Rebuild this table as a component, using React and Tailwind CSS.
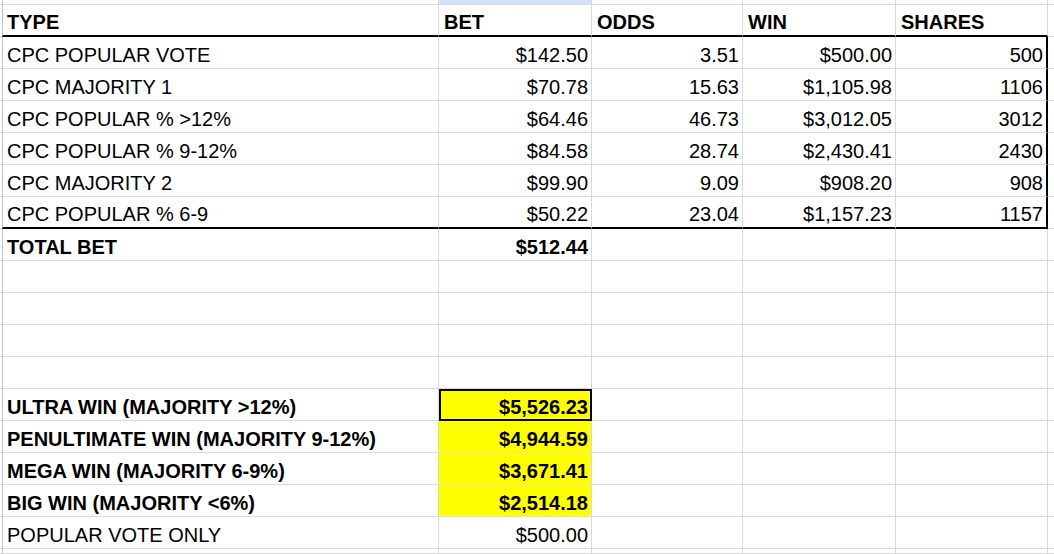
import React from "react";

const GRID = "border-b border-b-[#dadada]";
const GRID_R = "border-r border-r-[#dadada]";
const THICK_B = "border-b-2 border-b-black";

const data = [
  ["CPC POPULAR VOTE", "$142.50", "3.51", "$500.00", "500"],
  ["CPC MAJORITY 1", "$70.78", "15.63", "$1,105.98", "1106"],
  ["CPC POPULAR % >12%", "$64.46", "46.73", "$3,012.05", "3012"],
  ["CPC POPULAR % 9-12%", "$84.58", "28.74", "$2,430.41", "2430"],
  ["CPC MAJORITY 2", "$99.90", "9.09", "$908.20", "908"],
  ["CPC POPULAR % 6-9", "$50.22", "23.04", "$1,157.23", "1157"],
];

const wins = [
  ["ULTRA WIN (MAJORITY >12%)", "$5,526.23"],
  ["PENULTIMATE WIN (MAJORITY 9-12%)", "$4,944.59"],
  ["MEGA WIN (MAJORITY 6-9%)", "$3,671.41"],
  ["BIG WIN (MAJORITY <6%)", "$2,514.18"],
];

function Cell({ w, b = GRID, r = GRID_R, right, bold, extra = "", children }) {
  return (
    <div
      className={`${w} ${b} ${r} ${extra} h-full shrink-0 flex items-end pb-[3px] overflow-hidden whitespace-nowrap ${
        right ? "justify-end pr-[3px]" : "pl-[5px]"
      } ${bold ? "font-bold" : ""}`}
    >
      {children}
    </div>
  );
}

// one sheet row: gutter + A..E + the cut-off column F
function Row({ h = "h-[32px]", cells, fb = GRID }) {
  return (
    <div className={`flex ${h}`}>
      <div className={`w-[2px] shrink-0 ${GRID}`}></div>
      {cells}
      <div className={`flex-1 ${fb}`}></div>
    </div>
  );
}

function blankCells() {
  return (
    <>
      <Cell w="w-[151px]" />
      <Cell w="w-[153px]" />
      <Cell w="w-[152px]" />
    </>
  );
}

export default function App() {
  return (
    <div
      className="w-[1054px] h-[554px] overflow-hidden bg-white text-black text-[20px] leading-[20px]"
      style={{ fontFamily: '"Liberation Sans", Arial, sans-serif' }}
    >
      {/* sliver of the row above */}
      <Row
        h="h-[5px]"
        cells={
          <>
            <Cell w="w-[437px]" extra="border-l border-l-[#c4c4c4]" />
            <Cell w="w-[153px]" extra="bg-[#d3e3fd]" />
            <Cell w="w-[151px]" />
            <Cell w="w-[153px]" />
            <Cell w="w-[152px]" />
          </>
        }
      />

      {/* header */}
      <Row
        cells={
          <>
            <Cell w="w-[437px]" b={THICK_B} bold extra="border-l border-l-[#c4c4c4] !pl-[4px]">TYPE</Cell>
            <Cell w="w-[153px]" b={THICK_B} bold>BET</Cell>
            <Cell w="w-[151px]" b={THICK_B} bold>ODDS</Cell>
            <Cell w="w-[153px]" b={THICK_B} bold>WIN</Cell>
            <Cell w="w-[152px]" b={THICK_B} bold>SHARES</Cell>
          </>
        }
      />

      {data.map((row, i) => {
        const last = i === data.length - 1;
        const b = last ? THICK_B : GRID;
        return (
          <Row
            key={row[0]}
            cells={
              <>
                <Cell w="w-[437px]" b={b} extra="border-l border-l-[#c4c4c4] !pl-[4px]">{row[0]}</Cell>
                <Cell w="w-[153px]" b={b} right>{row[1]}</Cell>
                <Cell w="w-[151px]" b={b} right>{row[2]}</Cell>
                <Cell w="w-[153px]" b={b} right>{row[3]}</Cell>
                <Cell w="w-[152px]" b={b} r="border-r-2 border-r-black" right>{row[4]}</Cell>
              </>
            }
          />
        );
      })}

      <Row
        cells={
          <>
            <Cell w="w-[437px]" bold extra="border-l border-l-[#c4c4c4] !pl-[4px]">TOTAL BET</Cell>
            <Cell w="w-[153px]" bold right>$512.44</Cell>
            {blankCells()}
            <Cell w="w-[152px]" />
          </>
        }
      />

      {[0, 1, 2, 3].map((k) => (
        <Row
          key={k}
          cells={
            <>
              <Cell w="w-[437px]" extra="border-l border-l-[#c4c4c4]" />
              <Cell w="w-[153px]" />
              {blankCells()}
              <Cell w="w-[152px]" />
            </>
          }
        />
      ))}

      {wins.map(([label, amount], i) => (
        <Row
          key={label}
          cells={
            <>
              <Cell w="w-[437px]" bold extra="border-l border-l-[#c4c4c4] !pl-[4px]">{label}</Cell>
              {i === 0 ? (
                <Cell
                  w="w-[153px]"
                  b={THICK_B}
                  r="border-r-2 border-r-black"
                  bold
                  right
                  extra="bg-[#ffff00] border-t-2 border-t-black border-l-2 border-l-black !pr-[2px] !pb-[2px]"
                >
                  {amount}
                </Cell>
              ) : (
                <Cell w="w-[153px]" b="border-b border-b-[#e6e690]" bold right extra="bg-[#ffff00]">
                  {amount}
                </Cell>
              )}
              {blankCells()}
              <Cell w="w-[152px]" />
            </>
          }
        />
      ))}

      <Row
        cells={
          <>
            <Cell w="w-[437px]" extra="border-l border-l-[#c4c4c4] !pl-[4px]">POPULAR VOTE ONLY</Cell>
            <Cell w="w-[153px]" right>$500.00</Cell>
            {blankCells()}
            <Cell w="w-[152px]" />
          </>
        }
      />

      <Row
        h="h-[5px]"
        cells={
          <>
            <Cell w="w-[437px]" extra="border-l border-l-[#c4c4c4]" />
            <Cell w="w-[153px]" />
            {blankCells()}
            <Cell w="w-[152px]" />
          </>
        }
      />
    </div>
  );
}
